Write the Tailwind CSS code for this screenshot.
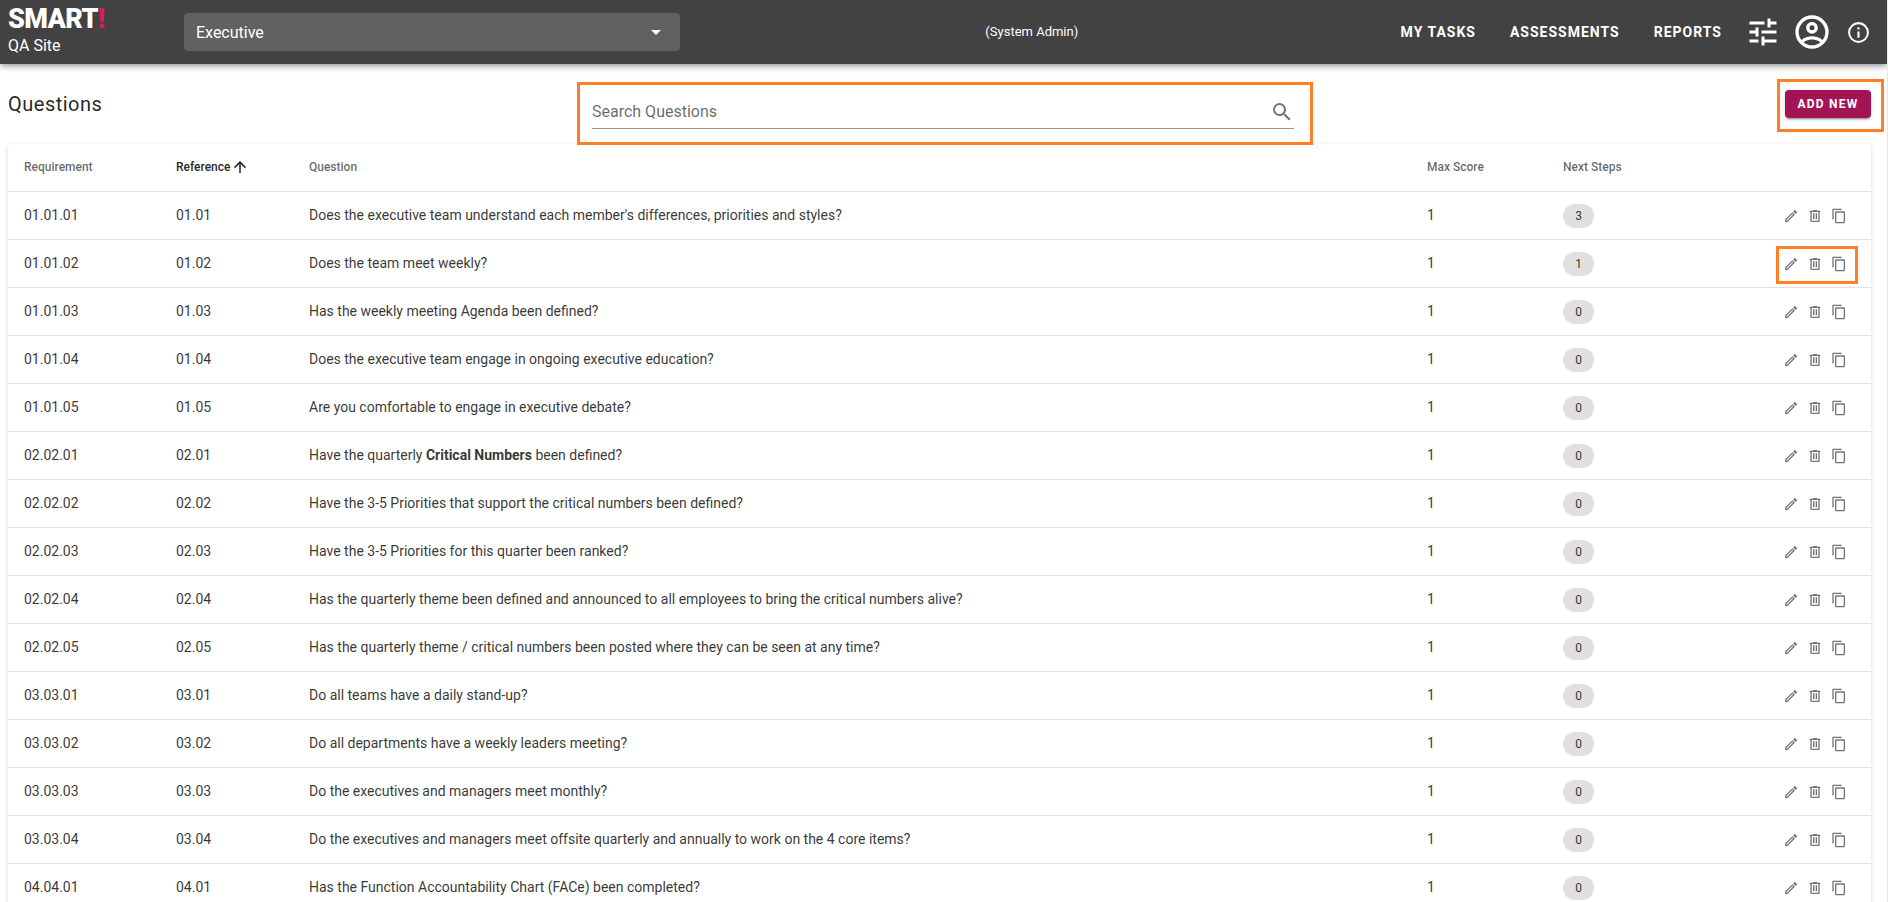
<!DOCTYPE html>
<html lang="en">
<head>
<meta charset="utf-8">
<meta name="viewport" content="width=device-width, initial-scale=1">
<title>Questions</title>
<script src="https://cdn.jsdelivr.net/npm/@tailwindcss/browser@4"></script>
</head>
<body class="min-h-screen border-r border-gray-200 bg-white font-['Roboto',sans-serif] text-black/87">
<svg class="hidden" aria-hidden="true">
  <symbol id="pencil" viewBox="0 0 24 24"><path d="M14.06,9L15,9.94L5.92,19H5V18.08L14.06,9M17.66,3C17.41,3 17.15,3.1 16.96,3.29L15.13,5.12L18.88,8.87L20.71,7.04C21.1,6.65 21.1,6 20.71,5.63L18.37,3.29C18.17,3.09 17.92,3 17.66,3M14.06,6.19L3,17.25V21H6.75L17.81,9.94L14.06,6.19Z"/></symbol>
  <symbol id="trash" viewBox="0 0 24 24"><path d="M9,3V4H4V6H5V19A2,2 0 0,0 7,21H17A2,2 0 0,0 19,19V6H20V4H15V3H9M7,6H17V19H7V6M9,8V17H11V8H9M13,8V17H15V8H13Z"/></symbol>
  <symbol id="copy" viewBox="0 0 24 24"><path d="M19,21H8V7H19M19,5H8A2,2 0 0,0 6,7V21A2,2 0 0,0 8,23H19A2,2 0 0,0 21,21V7A2,2 0 0,0 19,5M16,1H4A2,2 0 0,0 2,3V17H4V3H16V1Z"/></symbol>
</svg>

<header class="relative flex h-16 items-center bg-[#424242] pr-4 pl-2 text-white shadow-[0_2px_4px_-1px_rgba(0,0,0,0.2),0_4px_5px_rgba(0,0,0,0.14),0_1px_10px_rgba(0,0,0,0.12)]">
  <div class="w-44 shrink-0">
    <div class="text-[27px] leading-7 font-black tracking-tight">SMART<span class="text-[#e5136b]">!</span></div>
    <div class="text-base leading-[26px]">QA Site</div>
  </div>
  <div class="relative w-[496px]">
    <select aria-label="Department" class="block h-[38px] w-full appearance-none rounded bg-[#616161] px-3 pt-0.5 text-base text-white">
      <option>Executive</option>
    </select>
    <svg class="pointer-events-none absolute top-[7px] right-3 size-6" viewBox="0 0 24 24" fill="currentColor"><path d="M7,10L12,15L17,10H7Z"/></svg>
  </div>
  <div class="flex-1 text-center text-[13px]">(System Admin)</div>
  <nav class="flex items-center text-sm font-bold tracking-[1px]">
    <a href="#" class="px-[17px]">MY TASKS</a>
    <a href="#" class="px-[17px]">ASSESSMENTS</a>
    <a href="#" class="px-[17px]">REPORTS</a>
  </nav>
  <button aria-label="Settings" class="mr-[11px] ml-[6px]"><svg class="size-9" viewBox="0 0 24 24" fill="currentColor"><path d="M3,17V19H9V17H3M3,5V7H13V5H3M13,21V19H21V17H13V15H11V21H13M7,9V11H3V13H7V15H9V9H7M21,13V11H11V13H21M15,9H17V7H21V5H17V3H15V9Z"/></svg></button>
  <button aria-label="Account" class="mr-[14px]"><svg class="size-10" viewBox="0 0 24 24" fill="currentColor"><path d="M12,2A10,10 0 0,0 2,12A10,10 0 0,0 12,22A10,10 0 0,0 22,12A10,10 0 0,0 12,2M7.07,18.28C7.5,17.38 10.12,16.5 12,16.5C13.88,16.5 16.5,17.38 16.93,18.28C15.57,19.36 13.86,20 12,20C10.14,20 8.43,19.36 7.07,18.28M18.36,16.83C16.93,15.09 13.46,14.5 12,14.5C10.54,14.5 7.07,15.09 5.64,16.83C4.62,15.5 4,13.82 4,12C4,7.59 7.59,4 12,4C16.41,4 20,7.59 20,12C20,13.82 19.38,15.5 18.36,16.83M12,6C10.06,6 8.5,7.56 8.5,9.5C8.5,11.44 10.06,13 12,13C13.94,13 15.5,11.44 15.5,9.5C15.5,7.56 13.94,6 12,6M12,11A1.5,1.5 0 0,1 10.5,9.5A1.5,1.5 0 0,1 12,8A1.5,1.5 0 0,1 13.5,9.5A1.5,1.5 0 0,1 12,11Z"/></svg></button>
  <button aria-label="About"><svg class="size-[25px]" viewBox="0 0 24 24" fill="currentColor"><path d="M11,9H13V7H11M12,20C7.59,20 4,16.41 4,12C4,7.59 7.59,4 12,4C16.41,4 20,7.59 20,12C20,16.41 16.41,20 12,20M12,2A10,10 0 0,0 2,12A10,10 0 0,0 12,22A10,10 0 0,0 22,12A10,10 0 0,0 12,2M11,17H13V11H11V17Z"/></svg></button>
</header>

<main class="pr-4 pl-2">
  <div class="grid h-20 grid-cols-[584fr_702fr_577fr] items-center">
    <h1 class="text-xl font-normal tracking-wide">Questions</h1>
    <div class="relative mt-[17px] flex h-8 items-center border-b border-[#949494]">
      <input type="search" aria-label="Search Questions" placeholder="Search Questions" class="min-w-0 flex-1 text-base outline-none placeholder:text-black/60">
      <svg class="size-6 text-black/55" viewBox="0 0 24 24" fill="currentColor"><path d="M9.5,3A6.5,6.5 0 0,1 16,9.5C16,11.11 15.41,12.59 14.44,13.73L14.71,14H15.5L20.5,19L19,20.5L14,15.5V14.71L13.73,14.44C12.59,15.41 11.11,16 9.5,16A6.5,6.5 0 0,1 3,9.5A6.5,6.5 0 0,1 9.5,3M9.5,5C7,5 5,7 5,9.5C5,12 7,14 9.5,14C12,14 14,12 14,9.5C14,7 12,5 9.5,5Z"/></svg>
      <span class="pointer-events-none absolute -top-[15px] -right-[19px] -bottom-[17px] -left-[15px] z-10 border-3 border-[#ff7f27]"></span>
    </div>
    <div class="relative justify-self-end">
      <button class="block h-7 w-[86px] rounded bg-[#a31457] text-xs font-bold tracking-widest text-white shadow-[0_3px_1px_-2px_rgba(0,0,0,0.2),0_2px_2px_rgba(0,0,0,0.14),0_1px_5px_rgba(0,0,0,0.12)]">ADD NEW</button>
      <span class="pointer-events-none absolute -top-[11px] -right-[13px] -bottom-[14px] -left-2 z-10 border-3 border-[#ff7f27]"></span>
    </div>
  </div>

  <div class="rounded shadow-[0_1px_4px_rgba(0,0,0,0.16)]">
    <table class="w-full table-fixed text-left">
      <colgroup><col class="w-[152px]"><col class="w-[133px]"><col><col class="w-[136px]"><col class="w-[188px]"><col class="w-[136px]"></colgroup>
      <thead>
        <tr class="h-[47px] border-b border-black/12 text-xs text-black/60">
          <th class="px-4 font-medium">Requirement</th>
          <th class="px-4 font-medium text-black/87"><span class="flex items-center gap-px">Reference<svg class="size-[18px]" viewBox="0 0 24 24" fill="currentColor"><path d="M13,20H11V8L5.5,13.5L4.08,12.08L12,4.16L19.92,12.08L18.5,13.5L13,8V20Z"/></svg></span></th>
          <th class="px-4 font-medium">Question</th>
          <th class="px-4 font-medium">Max Score</th>
          <th class="px-4 font-medium">Next Steps</th>
          <th aria-label="Actions"></th>
        </tr>
      </thead>
      <tbody id="rows" class="text-sm text-black/80"></tbody>
    </table>
  </div>
</main>

<script>
const questions = [
  ["01.01.01", "01.01", "Does the executive team understand each member's differences, priorities and styles?", 3],
  ["01.01.02", "01.02", "Does the team meet weekly?", 1],
  ["01.01.03", "01.03", "Has the weekly meeting Agenda been defined?", 0],
  ["01.01.04", "01.04", "Does the executive team engage in ongoing executive education?", 0],
  ["01.01.05", "01.05", "Are you comfortable to engage in executive debate?", 0],
  ["02.02.01", "02.01", "Have the quarterly <b class=\"font-bold\">Critical Numbers</b> been defined?", 0],
  ["02.02.02", "02.02", "Have the 3-5 Priorities that support the critical numbers been defined?", 0],
  ["02.02.03", "02.03", "Have the 3-5 Priorities for this quarter been ranked?", 0],
  ["02.02.04", "02.04", "Has the quarterly theme been defined and announced to all employees to bring the critical numbers alive?", 0],
  ["02.02.05", "02.05", "Has the quarterly theme / critical numbers been posted where they can be seen at any time?", 0],
  ["03.03.01", "03.01", "Do all teams have a daily stand-up?", 0],
  ["03.03.02", "03.02", "Do all departments have a weekly leaders meeting?", 0],
  ["03.03.03", "03.03", "Do the executives and managers meet monthly?", 0],
  ["03.03.04", "03.04", "Do the executives and managers meet offsite quarterly and annually to work on the 4 core items?", 0],
  ["04.04.01", "04.01", "Has the Function Accountability Chart (FACe) been completed?", 0],
];
const highlight = '<span class="pointer-events-none absolute -top-[10px] -right-[11px] -bottom-3 -left-[7px] border-3 border-[#ff7f27]"></span>';
document.getElementById("rows").innerHTML = questions.map(([requirement, reference, question, steps], i) => `
  <tr class="h-12 border-b border-black/12">
    <td class="px-4">${requirement}</td>
    <td class="px-4">${reference}</td>
    <td class="px-4">${question}</td>
    <td class="px-4">1</td>
    <td class="px-4 pt-0.5"><span class="flex h-6 w-[31px] items-center justify-center rounded-full bg-[#e0e0e0] text-xs">${steps}</span></td>
    <td class="pt-0.5 pr-6">
      <div class="relative ml-auto flex w-16 gap-2 text-black/55">
        <button aria-label="Edit ${reference}"><svg class="size-4" fill="currentColor"><use href="#pencil"/></svg></button>
        <button aria-label="Delete ${reference}"><svg class="size-4" fill="currentColor"><use href="#trash"/></svg></button>
        <button aria-label="Copy ${reference}"><svg class="size-4" fill="currentColor"><use href="#copy"/></svg></button>
        ${i === 1 ? highlight : ""}
      </div>
    </td>
  </tr>`).join("");
</script>
</body>
</html>
